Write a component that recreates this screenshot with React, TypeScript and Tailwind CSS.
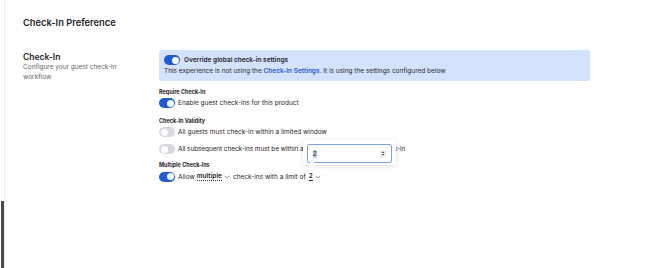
import React from "react";

function Toggle({ on }: { on: boolean }) {
  return (
    <span
      className={`relative inline-flex h-[10px] w-[16px] shrink-0 items-center rounded-full ${on ? "bg-[#1f5ad6]" : "bg-[#d9dadd]"}`}
    >
      <span className={`absolute h-[7px] w-[7px] rounded-full bg-white ${on ? "right-[1.5px]" : "left-[1.5px]"}`}></span>
    </span>
  );
}

function Chevron() {
  return (
    <svg width="6" height="4" viewBox="0 0 6 4" className="ml-[2px] inline-block" fill="none">
      <path d="M0.8 0.8 L3 3 L5.2 0.8" stroke="#6b7280" strokeWidth="0.8" />
    </svg>
  );
}

export default function App() {
  return (
    <div className="flex min-h-[268px] w-[670px] bg-white font-['Inter',sans-serif] text-[#1f2328]">
      {/* left rail */}
      <div className="flex w-[5px] flex-col border-r border-[#ececee]">
        <div className="h-[201px]"></div>
        <div className="ml-[1px] w-[3px] flex-1 bg-[#4a4a4c]"></div>
      </div>

      <div className="flex-1 pl-[18px] pt-[17px]">
        <h1 className="text-[9.3px] font-semibold leading-[11px]">Check-In Preference</h1>

        <div className="mt-[22px] flex">
          <div className="w-[136px] pt-[1.5px]">
            <h2 className="text-[8.5px] font-semibold leading-[10px]">Check-In</h2>
            <p className="w-[100px] text-[6.5px] leading-[10px] text-[#5f6368]">
              Configure your guest check-in workflow
            </p>
          </div>

          <div className="w-[431px] text-[6.5px] leading-[10px]">
            <div className="rounded-[2px] bg-[#d4e2fd] px-[5px] pb-[5px] pt-[5px]">
              <div className="flex items-center gap-[4px]">
                <Toggle on />
                <span className="font-semibold">Override global check-in settings</span>
              </div>
              <div className="mt-[1px]">
                This experience is not using the <span className="font-semibold text-[#1f5ad6]">Check-In Settings</span>. It is using the settings configured below
              </div>
            </div>

            <div className="mt-[7px] text-[5.5px] font-bold leading-[8px]">Require Check-In</div>
            <div className="mt-[2px] flex items-center gap-[3px]">
              <Toggle on />
              <span>Enable guest check-ins for this product</span>
            </div>

            <div className="mt-[9px] text-[5.5px] font-bold leading-[8px]">Check-In Validity</div>
            <div className="mt-[2px] flex items-center gap-[3px]">
              <Toggle on={false} />
              <span>All guests must check-in within a limited window</span>
            </div>
            <div className="mt-[7px] flex items-center gap-[3px]">
              <Toggle on={false} />
              <span className="tracking-[-0.1px]">All subsequent check-ins must be within a 24 hour window of each check-in</span>
            </div>

            <div className="mt-[7px] text-[5.5px] font-bold leading-[8px]">Multiple Check-Ins</div>
            <div className="mt-[2.5px] flex items-center gap-[3px]">
              <Toggle on />
              <span className="flex items-center">
                Allow
                <span className="ml-[2px] border-b border-dotted border-[#1f2328] font-semibold leading-[8px]">multiple</span>
                <Chevron />
                <span className="ml-[3px]">check-ins with a limit of</span>
                <span className="relative ml-[3px] border-b border-[#1f2328] font-semibold leading-[8px]">
                  2
                  {/* popover */}
                  <span className="absolute bottom-[15px] left-[-6px] block h-[25px] w-[93px] rounded-[3px] bg-white p-[4px] shadow-[0_1px_5px_rgba(0,0,0,0.14)]">
                    <span className="flex h-[19px] items-center justify-between rounded-[2px] border border-[#7aa2e8] px-[5px] font-normal">
                      <span className="bg-[#b7cdf5] text-[#1f2328]">2</span>
                      <span className="flex h-[7px] w-[6px] items-center justify-center rounded-[1px] bg-[#eeeeee]">
                        <svg width="4" height="5" viewBox="0 0 4 5" fill="#555">
                          <path d="M2 0.3 L3.5 2 H0.5 Z" />
                          <path d="M2 4.7 L3.5 3 H0.5 Z" />
                        </svg>
                      </span>
                    </span>
                    <span className="absolute bottom-[-3px] left-[6px] h-[6px] w-[6px] rotate-45 bg-white"></span>
                  </span>
                </span>
                <Chevron />
              </span>
            </div>
          </div>
        </div>
      </div>
    </div>
  );
}
